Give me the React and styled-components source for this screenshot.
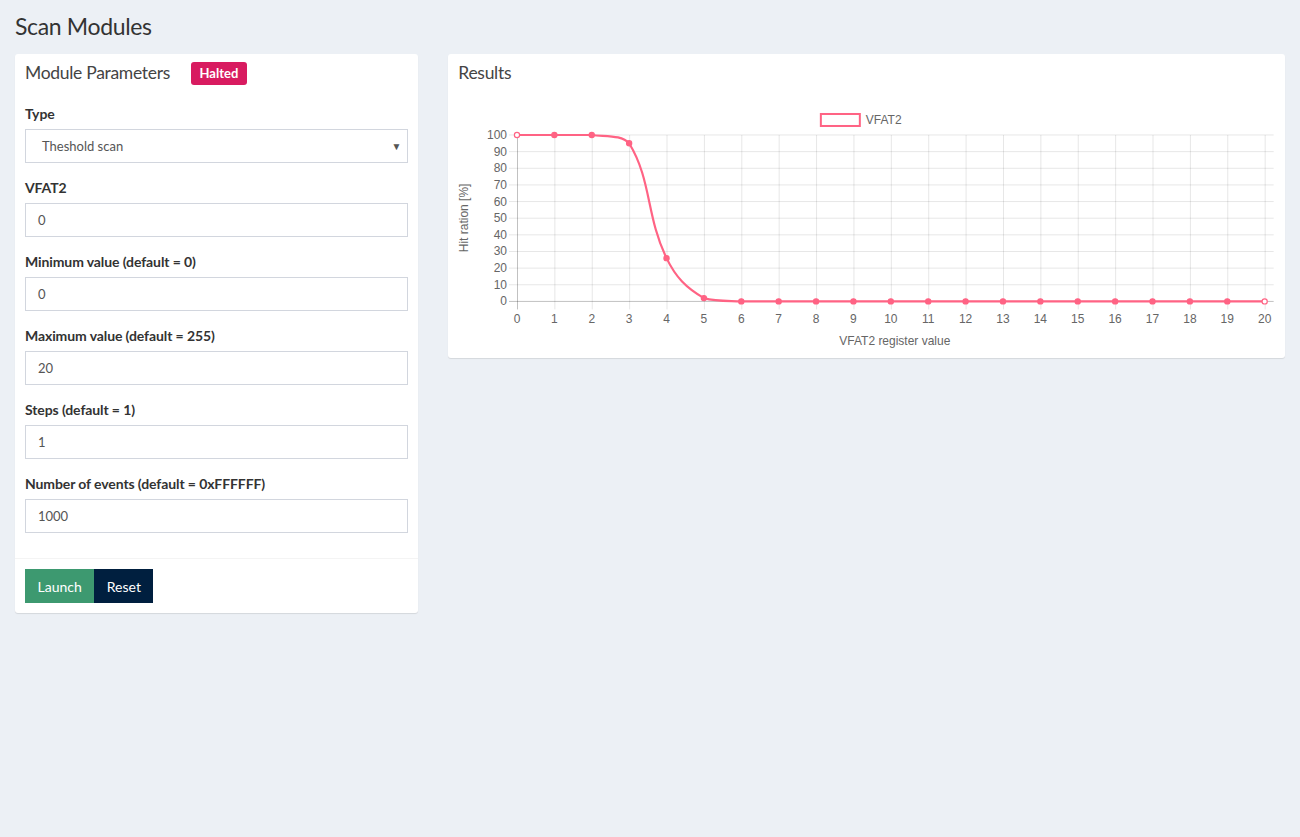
import React from "react"
import styled, { createGlobalStyle } from "styled-components"

const GlobalStyle = createGlobalStyle`
  * { box-sizing: border-box; }
  body {
    margin: 0;
    background: #ecf0f5;
    font-family: "Lato", "Noto Sans", sans-serif;
    color: #333;
  }
`

const Page = styled.div`
  min-height: 837px;
  background: #ecf0f5;
`

const ContentHeader = styled.section`
  padding: 13px 15px 0;
`

const PageTitle = styled.h1`
  margin: 0;
  font-size: 23px;
  letter-spacing: -0.35px;
  font-weight: 400;
  line-height: 26px;
  color: #333;
`

const Row = styled.div`
  display: grid;
  grid-template-columns: 1fr 2fr;
  margin-top: 15px;
  align-items: start;
`

const Col = styled.div`
  padding: 0 15px;
`

const Box = styled.div`
  background: #fff;
  border-radius: 3px;
  box-shadow: 0 1px 1px rgba(0, 0, 0, 0.1);
`

const BoxHeader = styled.div`
  display: flex;
  align-items: center;
  height: 40px;
  padding: 0 10px 3px;
`

const BoxTitle = styled.h3`
  margin: 0;
  font-size: 17.5px;
  letter-spacing: -0.3px;
  font-weight: 400;
  line-height: 20px;
  color: #444;
`

const Badge = styled.span`
  margin-left: 21px;
  margin-top: 2px;
  padding: 0 8.5px;
  height: 23px;
  line-height: 23px;
  border-radius: 3px;
  background: #d81b60;
  color: #fff;
  font-size: 13px;
  font-weight: 700;
`

const BoxBody = styled.div`
  padding: 10px;
`

const FormGroup = styled.div`
  margin-bottom: 15px;
`

const Label = styled.label`
  display: block;
  margin-bottom: 5px;
  font-size: 14px;
  letter-spacing: -0.1px;
  font-weight: 700;
  line-height: 20px;
  color: #333;
`

const Field = styled.div`
  position: relative;
  height: 34px;
  border: 1px solid #d2d6de;
  display: flex;
  align-items: center;
  padding-left: ${p => (p.select ? "16px" : "12px")};
  font-size: 13px;
  color: #555;
`

const Caret = styled.span`
  position: absolute;
  right: 6px;
  top: 10px;
  font-size: 10px;
  color: #555;
`

const BoxFooter = styled.div`
  border-top: 1px solid #f4f4f4;
  padding: 10px;
  display: flex;
`

const Button = styled.button`
  height: 34px;
  padding: 0 12.5px;
  border: none;
  border-radius: 0;
  font-family: inherit;
  font-size: 14px;
  color: #fff;
  background: ${p => p.bg};
`

const ChartWrap = styled.div`
  padding: 0 10px 10px;
`

const W = 817
const H = 254
const X0 = 59
const STEP = 37.4
const TOP = 41
const BOTTOM = 207.5
const px = i => X0 + i * STEP
const py = v => TOP + ((100 - v) / 100) * (BOTTOM - TOP)
const data = [100, 100, 100, 95, 26, 2, 0, 0, 0, 0, 0, 0, 0, 0, 0, 0, 0, 0, 0, 0, 0]
const PINK = "#ff6384"

function buildPath() {
  const pts = data.map((v, i) => ({ x: px(i), y: py(v) }))
  const t = 0.4
  const clamp = y => Math.max(TOP, Math.min(BOTTOM, y))
  const cps = pts.map((cur, i) => {
    const prev = pts[i - 1] || cur
    const next = pts[i + 1] || cur
    const d01 = Math.hypot(cur.x - prev.x, cur.y - prev.y)
    const d12 = Math.hypot(next.x - cur.x, next.y - cur.y)
    const fa = t * (d01 / (d01 + d12 || 1))
    const fb = t * (d12 / (d01 + d12 || 1))
    return {
      prev: { x: cur.x - fa * (next.x - prev.x), y: clamp(cur.y - fa * (next.y - prev.y)) },
      next: { x: cur.x + fb * (next.x - prev.x), y: clamp(cur.y + fb * (next.y - prev.y)) },
    }
  })
  let d = `M${pts[0].x},${pts[0].y}`
  for (let i = 1; i < pts.length; i++) {
    const a = cps[i - 1].next
    const b = cps[i].prev
    d += ` C${a.x},${a.y} ${b.x},${b.y} ${pts[i].x},${pts[i].y}`
  }
  return d
}

const Chart = () => {
  const yTicks = [0, 10, 20, 30, 40, 50, 60, 70, 80, 90, 100]
  const xTicks = data.map((_, i) => i)
  return (
    <svg width="100%" viewBox={`0 0 ${W} ${H}`} style={{ display: "block" }}>
      <g fontFamily="'Liberation Sans', Arial, sans-serif" fontSize="12" fill="#666">
        <rect x="363" y="20" width="39" height="12" fill="none" stroke={PINK} strokeWidth="2" />
        <text x="408" y="30">VFAT2</text>

        {yTicks.map(v => (
          <g key={"y" + v}>
            <line x1={X0 - 8} x2={W - 1} y1={py(v)} y2={py(v)}
              stroke={v === 0 ? "rgba(0,0,0,0.25)" : "rgba(0,0,0,0.1)"} />
            <text x={X0 - 10} y={py(v) + 4} textAnchor="end">{v}</text>
          </g>
        ))}
        {xTicks.map(i => (
          <g key={"x" + i}>
            <line x1={px(i) + 0.5} x2={px(i) + 0.5} y1={TOP} y2={BOTTOM + 8}
              stroke={i === 0 ? "rgba(0,0,0,0.25)" : "rgba(0,0,0,0.1)"} />
            <text x={px(i)} y={229} textAnchor="middle">{i}</text>
          </g>
        ))}
        <text x="437" y="251" textAnchor="middle">VFAT2 register value</text>
        <text x="10" y="124" textAnchor="middle" transform="rotate(-90 10 124)">Hit ration [%]</text>
      </g>
      <path d={buildPath()} fill="none" stroke={PINK} strokeWidth="2.2" />
      {data.map((v, i) => (
        <circle key={i} cx={px(i)} cy={py(v)} r="2.6"
          fill={i === 0 || i === 20 ? "#fff" : PINK} stroke={PINK} strokeWidth="1.2" />
      ))}
    </svg>
  )
}

const fields = [
  { label: "VFAT2", value: "0" },
  { label: "Minimum value (default = 0)", value: "0" },
  { label: "Maximum value (default = 255)", value: "20" },
  { label: "Steps (default = 1)", value: "1" },
  { label: "Number of events (default = 0xFFFFFF)", value: "1000" },
]

const App = () => {
  return (
    <Page>
      <GlobalStyle />
      <ContentHeader>
        <PageTitle>Scan Modules</PageTitle>
      </ContentHeader>
      <Row>
        <Col>
          <Box>
            <BoxHeader>
              <BoxTitle>Module Parameters</BoxTitle>
              <Badge>Halted</Badge>
            </BoxHeader>
            <BoxBody>
              <FormGroup>
                <Label>Type</Label>
                <Field select>
                  Theshold scan
                  <Caret>▼</Caret>
                </Field>
              </FormGroup>
              {fields.map(f => (
                <FormGroup key={f.label}>
                  <Label>{f.label}</Label>
                  <Field>{f.value}</Field>
                </FormGroup>
              ))}
            </BoxBody>
            <BoxFooter>
              <Button bg="#3d9970">Launch</Button>
              <Button bg="#001f3f">Reset</Button>
            </BoxFooter>
          </Box>
        </Col>
        <Col>
          <Box>
            <BoxHeader>
              <BoxTitle>Results</BoxTitle>
            </BoxHeader>
            <ChartWrap>
              <Chart />
            </ChartWrap>
          </Box>
        </Col>
      </Row>
    </Page>
  )
}

export default App
